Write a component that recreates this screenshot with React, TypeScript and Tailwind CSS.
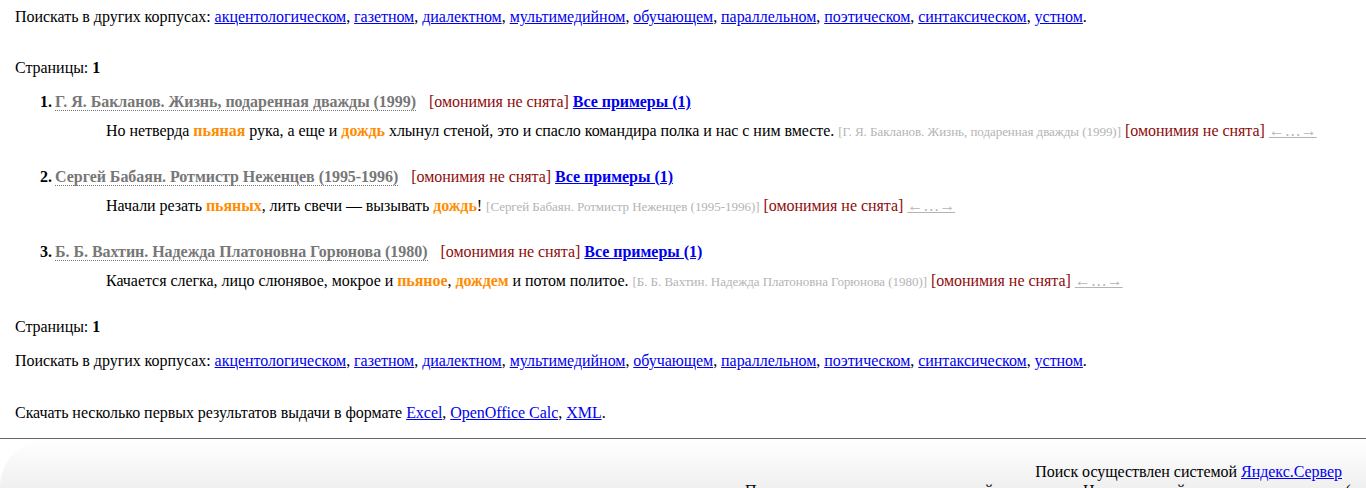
const corpora = [
  "акцентологическом",
  "газетном",
  "диалектном",
  "мультимедийном",
  "обучающем",
  "параллельном",
  "поэтическом",
  "синтаксическом",
  "устном",
];

type Part = string | { hit: string };

type Doc = {
  title: string;
  parts: Part[];
};

const docs: Doc[] = [
  {
    title: "Г. Я. Бакланов. Жизнь, подаренная дважды (1999)",
    parts: [
      "Но нетверда ",
      { hit: "пьяная" },
      " рука, а еще и ",
      { hit: "дождь" },
      " хлынул стеной, это и спасло командира полка и нас с ним вместе.",
    ],
  },
  {
    title: "Сергей Бабаян. Ротмистр Неженцев (1995-1996)",
    parts: ["Начали резать ", { hit: "пьяных" }, ", лить свечи — вызывать ", { hit: "дождь" }, "!"],
  },
  {
    title: "Б. Б. Вахтин. Надежда Платоновна Горюнова (1980)",
    parts: [
      "Качается слегка, лицо слюнявое, мокрое и ",
      { hit: "пьяное" },
      ", ",
      { hit: "дождем" },
      " и потом политое.",
    ],
  },
];

function OtherCorpora() {
  return (
    <p>
      Поискать в других корпусах:{" "}
      {corpora.map((c, i) => (
        <span key={c}>
          <a href="#" className="text-[#0000ee] underline">
            {c}
          </a>
          {i < corpora.length - 1 ? ", " : "."}
        </span>
      ))}
    </p>
  );
}

function Pages() {
  return (
    <p>
      Страницы: <b>1</b>
    </p>
  );
}

const Homonymy = () => <span className="text-[#8e0b0b]">[омонимия не снята]</span>;

export default function App() {
  return (
    <div className="min-h-[488px] overflow-hidden bg-white font-['Liberation_Serif',serif] text-[16px] leading-[18px] tracking-[-0.04px] text-black">
      <div className="px-[15px] pt-[8px]">
        <OtherCorpora />
        <div className="mt-[33px]">
          <Pages />
        </div>
        <ol className="mt-[16px] flex flex-col gap-[27px] pl-[40px]">
          {docs.map((d, i) => (
            <li key={i} className="relative">
              <span className="absolute right-full mr-[3px] font-bold">{i + 1}.</span>
              <div>
                <span className="border-b border-dotted border-[#777] font-bold text-[#777]">{d.title}</span>
                <span className="ml-[13px]">
                  <Homonymy />{" "}
                  <a href="#" className="font-bold text-[#0000ee] underline">
                    Все примеры (1)
                  </a>
                </span>
              </div>
              <div className="mt-[11px] pl-[51px]">
                {d.parts.map((p, j) =>
                  typeof p === "string" ? (
                    <span key={j}>{p}</span>
                  ) : (
                    <b key={j} className="text-[#ff8c00]">
                      {p.hit}
                    </b>
                  )
                )}{" "}
                <span className="text-[13px] text-[#b4b4b4]">[{d.title}]</span> <Homonymy />{" "}
                <a href="#" className="text-[#b4b4b4] underline">
                  ←…→
                </a>
              </div>
            </li>
          ))}
        </ol>
        <div className="mt-[27px]">
          <Pages />
        </div>
        <div className="mt-[16px]">
          <OtherCorpora />
        </div>
        <p className="mt-[34px]">
          Скачать несколько первых результатов выдачи в формате{" "}
          <a href="#" className="text-[#0000ee] underline">
            Excel
          </a>
          ,{" "}
          <a href="#" className="text-[#0000ee] underline">
            OpenOffice Calc
          </a>
          ,{" "}
          <a href="#" className="text-[#0000ee] underline">
            XML
          </a>
          .
        </p>
      </div>
      <hr className="mt-[16px] border-t border-[#666]" />
      <div className="rounded-tl-[48px] bg-gradient-to-b from-white to-[#e9e9e9] pt-[24px] pb-[10px]">
        <p className="pr-[24px] text-right">
          Поиск осуществлен системой{" "}
          <a href="#" className="text-[#0000ee] underline">
            Яндекс.Сервер
          </a>
        </p>
        <div className="mt-[1px] flex whitespace-nowrap pl-[745px]">
          <span className="w-[338px] overflow-hidden">Предложения и замечания присылайте по адресу</span>
          <span>Национальный корпус русского языка (</span>
        </div>
      </div>
    </div>
  );
}
